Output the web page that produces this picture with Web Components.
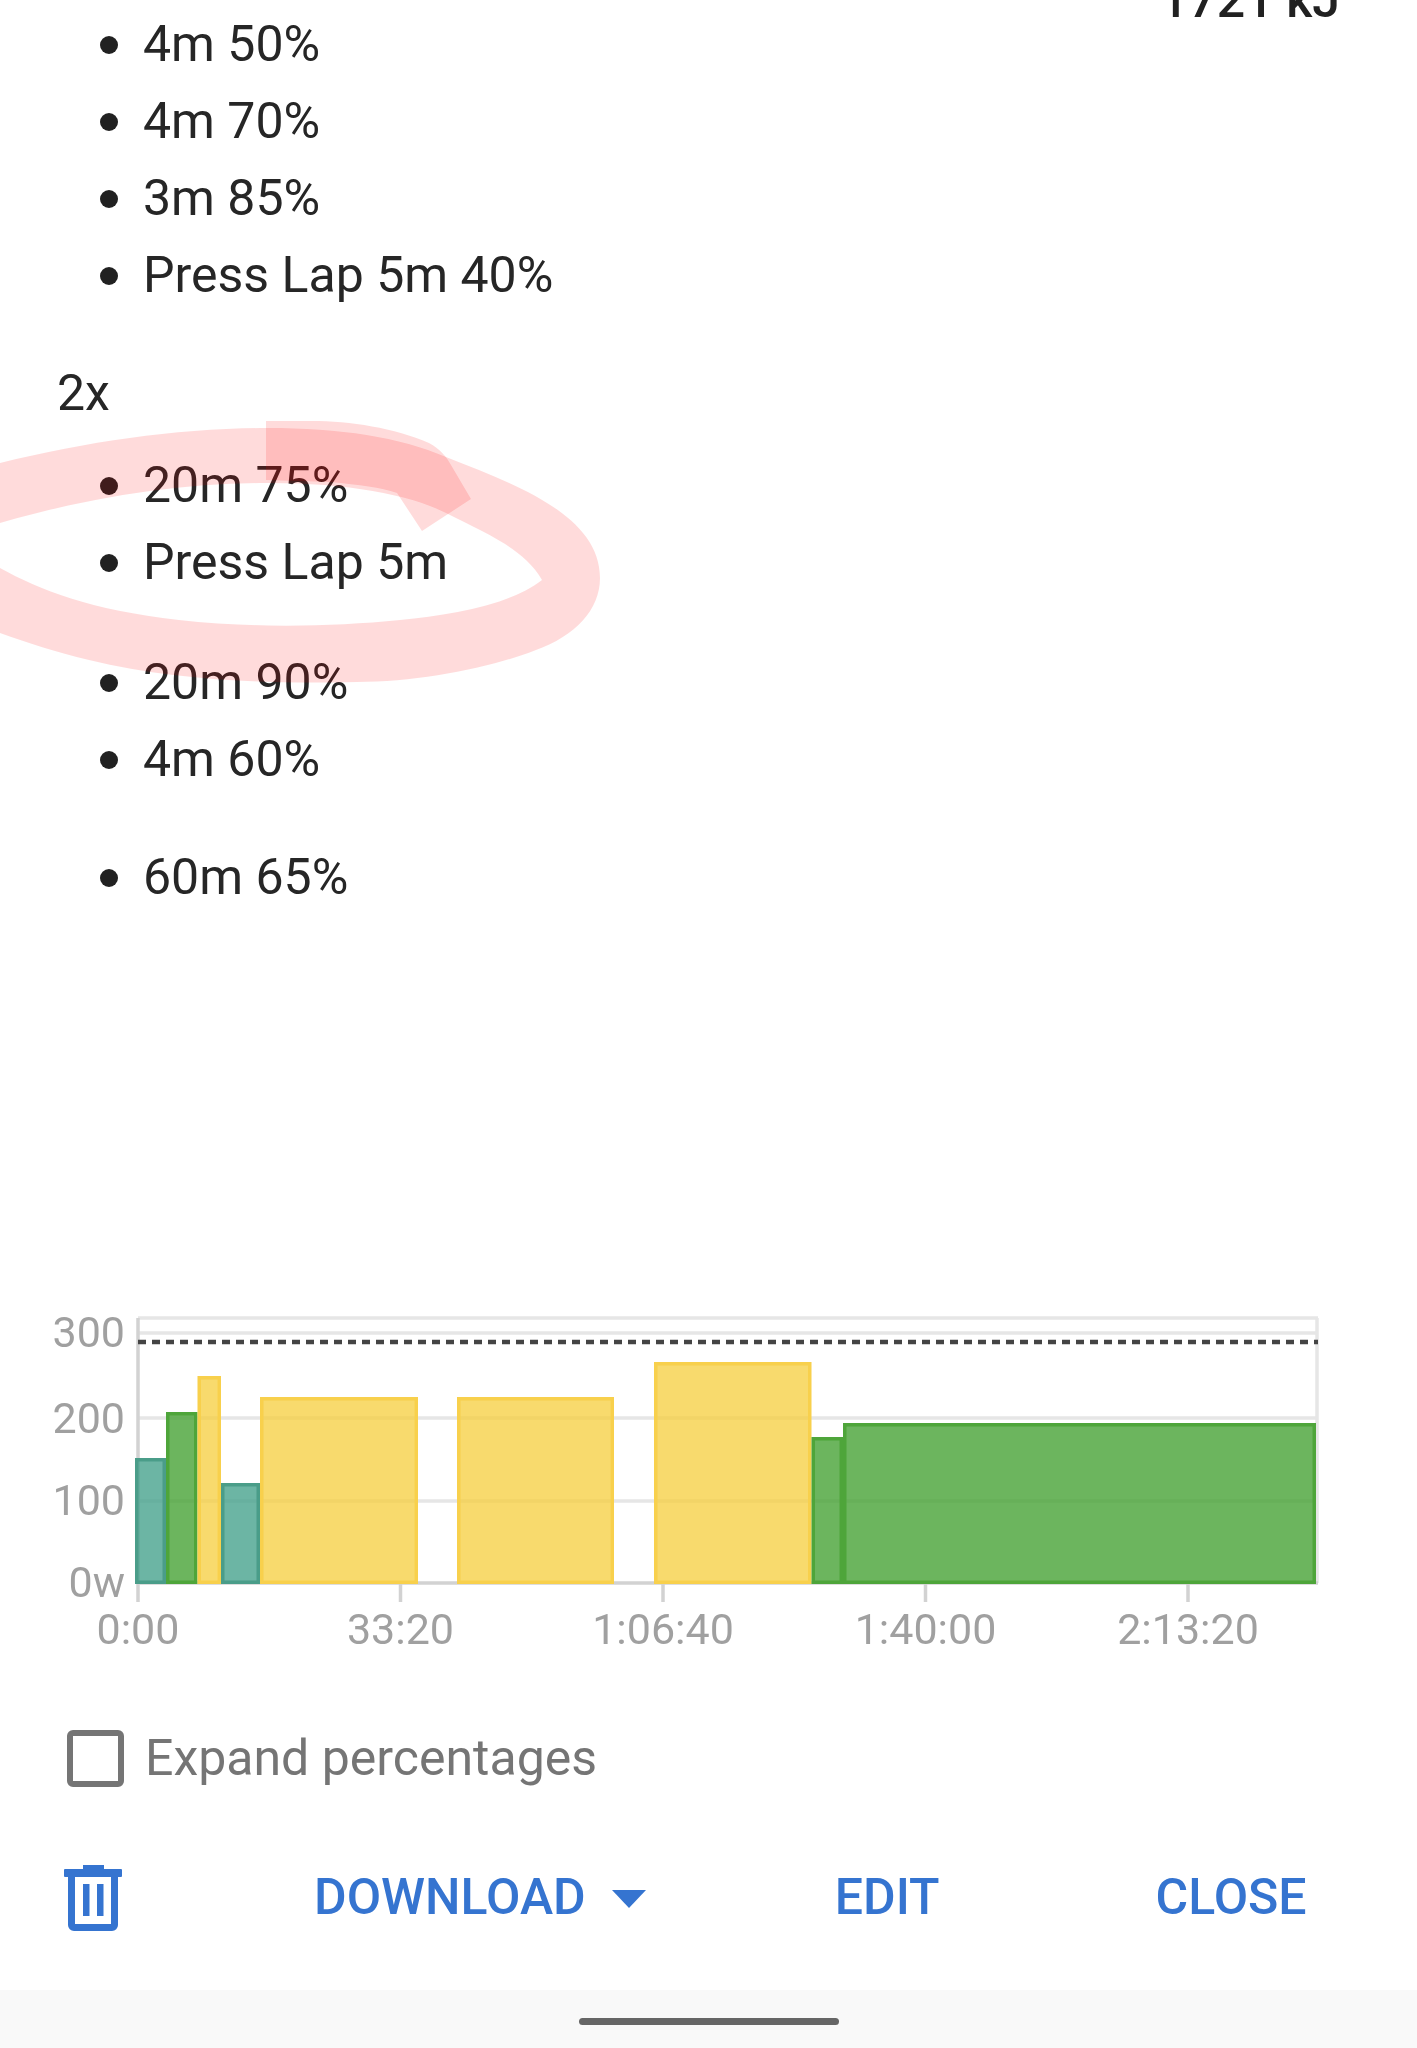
<!DOCTYPE html>
<html>
<head>
<meta charset="utf-8">
<title>Workout</title>
<style>
html,body{margin:0;padding:0;background:#fff;}
body{width:1417px;height:2048px;overflow:hidden;font-family:Roboto,"Liberation Sans",sans-serif;color:#212121;}
</style>
</head>
<body>
<workout-page>
    <energy-stat>1721 kJ</energy-stat>
    <step-list style="margin-top:-11px">
        <step-item>4m 50%</step-item>
        <step-item>4m 70%</step-item>
        <step-item>3m 85%</step-item>
        <step-item>Press Lap 5m 40%</step-item>
    </step-list>
    <step-repeat style="margin-top:41px">2x</step-repeat>
    <step-list style="margin-top:15px">
        <step-item>20m 75%</step-item>
        <step-item>Press Lap 5m</step-item>
    </step-list>
    <step-list style="margin-top:43px">
        <step-item>20m 90%</step-item>
        <step-item>4m 60%</step-item>
    </step-list>
    <step-list style="margin-top:41px">
        <step-item>60m 65%</step-item>
    </step-list>
    <power-chart></power-chart>
    <check-row>Expand percentages</check-row>
    <action-bar></action-bar>
    <nav-bar></nav-bar>
    <scribble-mark></scribble-mark>
</workout-page>
<script>
customElements.define('workout-page', class extends HTMLElement {
    constructor() {
        super();
        this.attachShadow({ mode: 'open' }).innerHTML = `
        <style>
        :host {
            display:flex;flex-direction:column;
            position:relative;
            width:1417px;height:2048px;
            overflow:hidden;
            filter:blur(.6px);
        }
        </style>
        <slot></slot>`;
    }
});
customElements.define('energy-stat', class extends HTMLElement {
    constructor() {
        super();
        this.attachShadow({ mode: 'open' }).innerHTML = `
        <style>
        :host {
            display:flex;justify-content:flex-end;align-items:flex-end;
            height:17px;
            padding-right:77px;
            overflow:hidden;
            font-size:50px;line-height:77px;font-weight:500;
            color:#212121;
        }
        span { display:block;margin-bottom:-22px; }
        </style>
        <span><slot></slot></span>`;
    }
});
customElements.define('step-list', class extends HTMLElement {
    constructor() {
        super();
        this.attachShadow({ mode: 'open' }).innerHTML = `
        <style>
        :host { display:flex;flex-direction:column;padding-left:100px; }
        </style>
        <slot></slot>`;
    }
});
customElements.define('step-item', class extends HTMLElement {
    constructor() {
        super();
        this.attachShadow({ mode: 'open' }).innerHTML = `
        <style>
        :host {
            display:flex;align-items:center;gap:25px;
            height:77px;
            font-size:50px;line-height:77px;
            color:#262626;
        }
        i { display:block;width:18px;height:18px;border-radius:50%;background:#212121;margin-top:1px; }
        </style>
        <i></i><span><slot></slot></span>`;
    }
});
customElements.define('step-repeat', class extends HTMLElement {
    constructor() {
        super();
        this.attachShadow({ mode: 'open' }).innerHTML = `
        <style>
        :host { display:block;padding-left:57px;height:77px;font-size:50px;line-height:77px;color:#262626; }
        </style>
        <slot></slot>`;
    }
});
customElements.define('power-chart', class extends HTMLElement {
    constructor() {
        super();
        const bars = [
            ['teal', 135, 166, 1458],
            ['green', 166, 197.5, 1412],
            ['yellow', 197.5, 221, 1376],
            ['teal', 221, 260, 1483],
            ['yellow', 260, 418, 1397],
            ['yellow', 457, 614, 1397],
            ['yellow', 654, 811.5, 1362],
            ['green', 811.5, 843, 1437],
            ['green', 843, 1316, 1423],
        ];
        const top = 1300;
        const ticks = [[138, '0:00'], [400.5, '33:20'], [663, '1:06:40'], [925.5, '1:40:00'], [1188, '2:13:20']];
        const ys = [[1333, '300', 1347], [1418, '200', 1433], [1501, '100', 1515], [1583, '0w', 1597]];
        this.attachShadow({ mode: 'open' }).innerHTML = `
        <style>
        :host { display:block;height:360px;margin-top:384px; }
        svg { display:block; }
        text { font-family:Roboto,"Liberation Sans",sans-serif;font-size:43px;font-weight:400;fill:#a0a0a0; }
        .grid { stroke:#e6e6e6;stroke-width:3.500; }
        .axis { stroke:#d2d2d2;stroke-width:3.500; }
        .teal { fill:#43a08b;fill-opacity:.78;stroke:#4a9d89; }
        .green { fill:#47a336;fill-opacity:.8;stroke:#4ea53a; }
        .yellow { fill:#f6ce3f;fill-opacity:.76;stroke:#f8d04c; }
        rect { stroke-width:3.500; }
        </style>
        <svg width="1417" height="360" viewBox="0 ${top} 1417 360">
            <line class="grid" x1="138" x2="1318" y1="1318" y2="1318"/>
            <line class="grid" x1="1317" x2="1317" y1="1318" y2="1583"/>
            ${ys.slice(0, 3).map(([y]) => `<line class="grid" x1="138" x2="1318" y1="${y}" y2="${y}"/>`).join('')}
            <line class="axis" x1="138" x2="1318" y1="1583" y2="1583"/>
            <line class="axis" x1="138" x2="138" y1="1318" y2="1602"/>
            ${ticks.slice(1).map(([x]) => `<line class="axis" x1="${x}" x2="${x}" y1="1583" y2="1602"/>`).join('')}
            ${bars.map(([kind, a, b, y]) => `<rect class="${kind}" x="${a + 1.75}" y="${y + 1.75}" width="${b - a - 3.5}" height="${1584 - y - 3.5}"/>`).join('')}
            <line x1="138" x2="1318" y1="1342" y2="1342" stroke="#444" stroke-width="4.500" stroke-dasharray="8 6"/>
            ${ys.map(([, t, y]) => `<text x="125" y="${y}" text-anchor="end">${t}</text>`).join('')}
            ${ticks.map(([x, t]) => `<text x="${x}" y="1644" text-anchor="middle">${t}</text>`).join('')}
        </svg>`;
    }
});
customElements.define('check-row', class extends HTMLElement {
    constructor() {
        super();
        this.attachShadow({ mode: 'open' }).innerHTML = `
        <style>
        :host {
            display:flex;align-items:center;gap:21px;
            height:68px;margin-top:64px;padding-left:67px;
            font-size:50px;color:#757575;
        }
        i { display:block;box-sizing:border-box;width:57px;height:57px;border:6px solid #757575;border-radius:6px; }
        </style>
        <i></i><span><slot></slot></span>`;
    }
});
customElements.define('action-bar', class extends HTMLElement {
    constructor() {
        super();
        this.attachShadow({ mode: 'open' }).innerHTML = `
        <style>
        :host {
            display:flex;align-items:center;
            height:70px;margin-top:70px;padding-left:64px;
            font-size:50px;font-weight:500;color:#3574d0;
        }
        svg { display:block;flex:none; }
        .trash { margin-top:1px; }
        .download { margin-left:192px; }
        .caret { margin-left:26px;margin-top:3px; }
        .edit { margin-left:189px; }
        .close { margin-left:216px; }
        </style>
        <svg class="trash" width="58" height="66" viewBox="0 0 58 66" fill="#3574d0">
            <rect x="19" y="0" width="21" height="6"/>
            <rect x="0" y="4" width="58" height="8" rx="1"/>
            <path d="M4 10h50v50a6 6 0 0 1-6 6H10a6 6 0 0 1-6-6zM11 12v47h36V12z" fill-rule="evenodd"/>
            <rect x="19" y="19" width="6.500" height="32"/>
            <rect x="33" y="19" width="6.500" height="32"/>
        </svg>
        <span class="download">DOWNLOAD</span>
        <svg class="caret" width="34" height="18" viewBox="0 0 34 18" fill="#3574d0"><path d="M0 0h34L17 18z"/></svg>
        <span class="edit">EDIT</span>
        <span class="close">CLOSE</span>`;
    }
});
customElements.define('nav-bar', class extends HTMLElement {
    constructor() {
        super();
        this.attachShadow({ mode: 'open' }).innerHTML = `
        <style>
        :host {
            display:flex;justify-content:center;
            margin-top:auto;
            height:58px;
            background:#f9f9f9;
        }
        i { display:block;width:260px;height:7px;margin-top:28px;border-radius:4px;background:#666; }
        </style>
        <i></i>`;
    }
});
customElements.define('scribble-mark', class extends HTMLElement {
    constructor() {
        super();
        this.attachShadow({ mode: 'open' }).innerHTML = `
        <style>
        :host { position:absolute;left:0;top:400px;width:620px;height:300px;pointer-events:none; }
        svg { display:block; }
        path { fill:#ff0000;fill-opacity:.14; }
        </style>
        <svg width="620" height="300" viewBox="0 400 620 300">
            <path d="M0 463C90 441 180 428 268 428C340 428 400 437 446 457C515 484 600 515 600 578C600 610 575 636 536 650C490 668 420 682 357 682C280 684 179 682 89 660C55 652 28 643 0 633V568C40 590 90 610 179 620C250 628 330 627 400 620C450 615 510 605 542 580C525 550 490 535 446 513C410 495 350 483 268 483C180 483 90 497 0 523Z"/>
            <path d="M266 421H312C350 421 395 428 429 443C440 449 446 456 451 465L471 499L422 531L397 493C380 487 360 485 330 482C310 481 285 481 266 480Z"/>
        </svg>`;
    }
});
</script>
</body>
</html>
